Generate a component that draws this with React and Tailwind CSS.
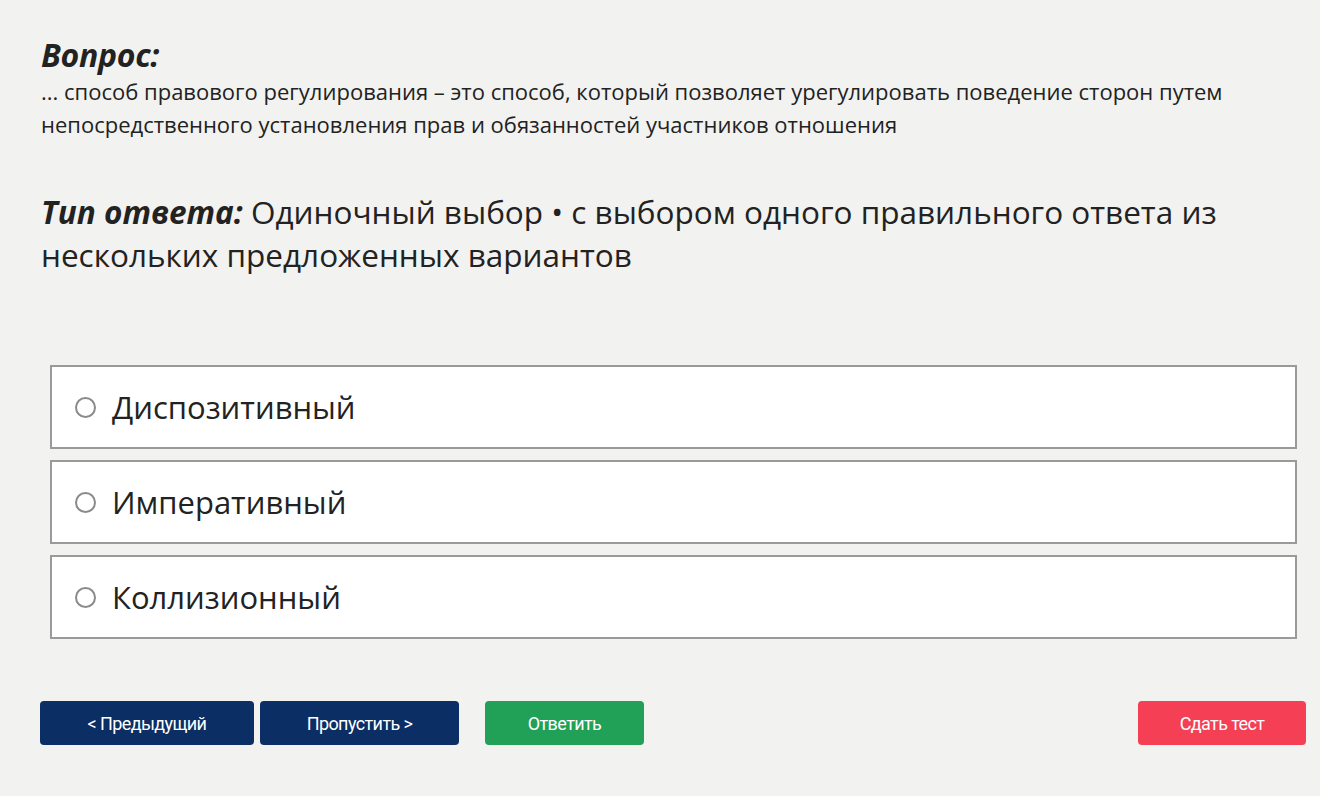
import { useState } from 'react'

const options = ['Диспозитивный', 'Императивный', 'Коллизионный']

export default function App() {
  const [selected, setSelected] = useState(null)

  return (
    <div className="min-h-[796px] w-full bg-[#f2f2f0] px-[41px] pt-[36px] text-[#222] font-['Open_Sans',sans-serif]">
      {/* Question */}
      <h2 className="text-[32px] font-bold italic leading-[38px] tracking-[-0.3px]">Вопрос:</h2>
      <p className="mt-[1px] text-[22px] leading-[33px] pr-[40px]">
        ... способ правового регулирования – это способ, который позволяет урегулировать поведение сторон путем
        непосредственного установления прав и обязанностей участников отношения
      </p>

      {/* Answer type */}
      <p className="mt-[49px] text-[31.5px] leading-[43px] pr-[20px]">
        <span className="font-bold italic">Тип ответа:</span>{' '}Одиночный выбор • с выбором одного правильного ответа из
        нескольких предложенных вариантов
      </p>

      {/* Options */}
      <div className="mt-[89px] ml-[9px] mr-[-18px] flex flex-col gap-[11px]">
        {options.map((opt, i) => (
          <label
            key={i}
            onClick={() => setSelected(i)}
            className="flex h-[84px] cursor-pointer items-center border-2 border-[#9a9a9a] bg-white pl-[23px]"
          >
            <span className="flex h-[21px] w-[21px] items-center justify-center rounded-full border-2 border-[#8a8a8a]">
              {selected === i && <span className="h-[11px] w-[11px] rounded-full bg-[#333]" />}
            </span>
            <span className="ml-[16px] text-[31px]">{opt}</span>
          </label>
        ))}
      </div>

      {/* Buttons */}
      <div className="mt-[62px] ml-[-1px] mr-[-27px] flex items-center text-[18px] tracking-[-0.6px] text-white font-['Roboto',sans-serif]">
        <button className="h-[44px] w-[214px] rounded-[4px] bg-[#0b2e64]">&lt; Предыдущий</button>
        <button className="ml-[6px] h-[44px] w-[199px] rounded-[4px] bg-[#0b2e64]">Пропустить &gt;</button>
        <button className="ml-[26px] h-[44px] w-[159px] rounded-[4px] bg-[#21a157]">Ответить</button>
        <button className="ml-auto h-[44px] w-[168px] rounded-[4px] bg-[#f53f55]">Сдать тест</button>
      </div>
    </div>
  )
}
